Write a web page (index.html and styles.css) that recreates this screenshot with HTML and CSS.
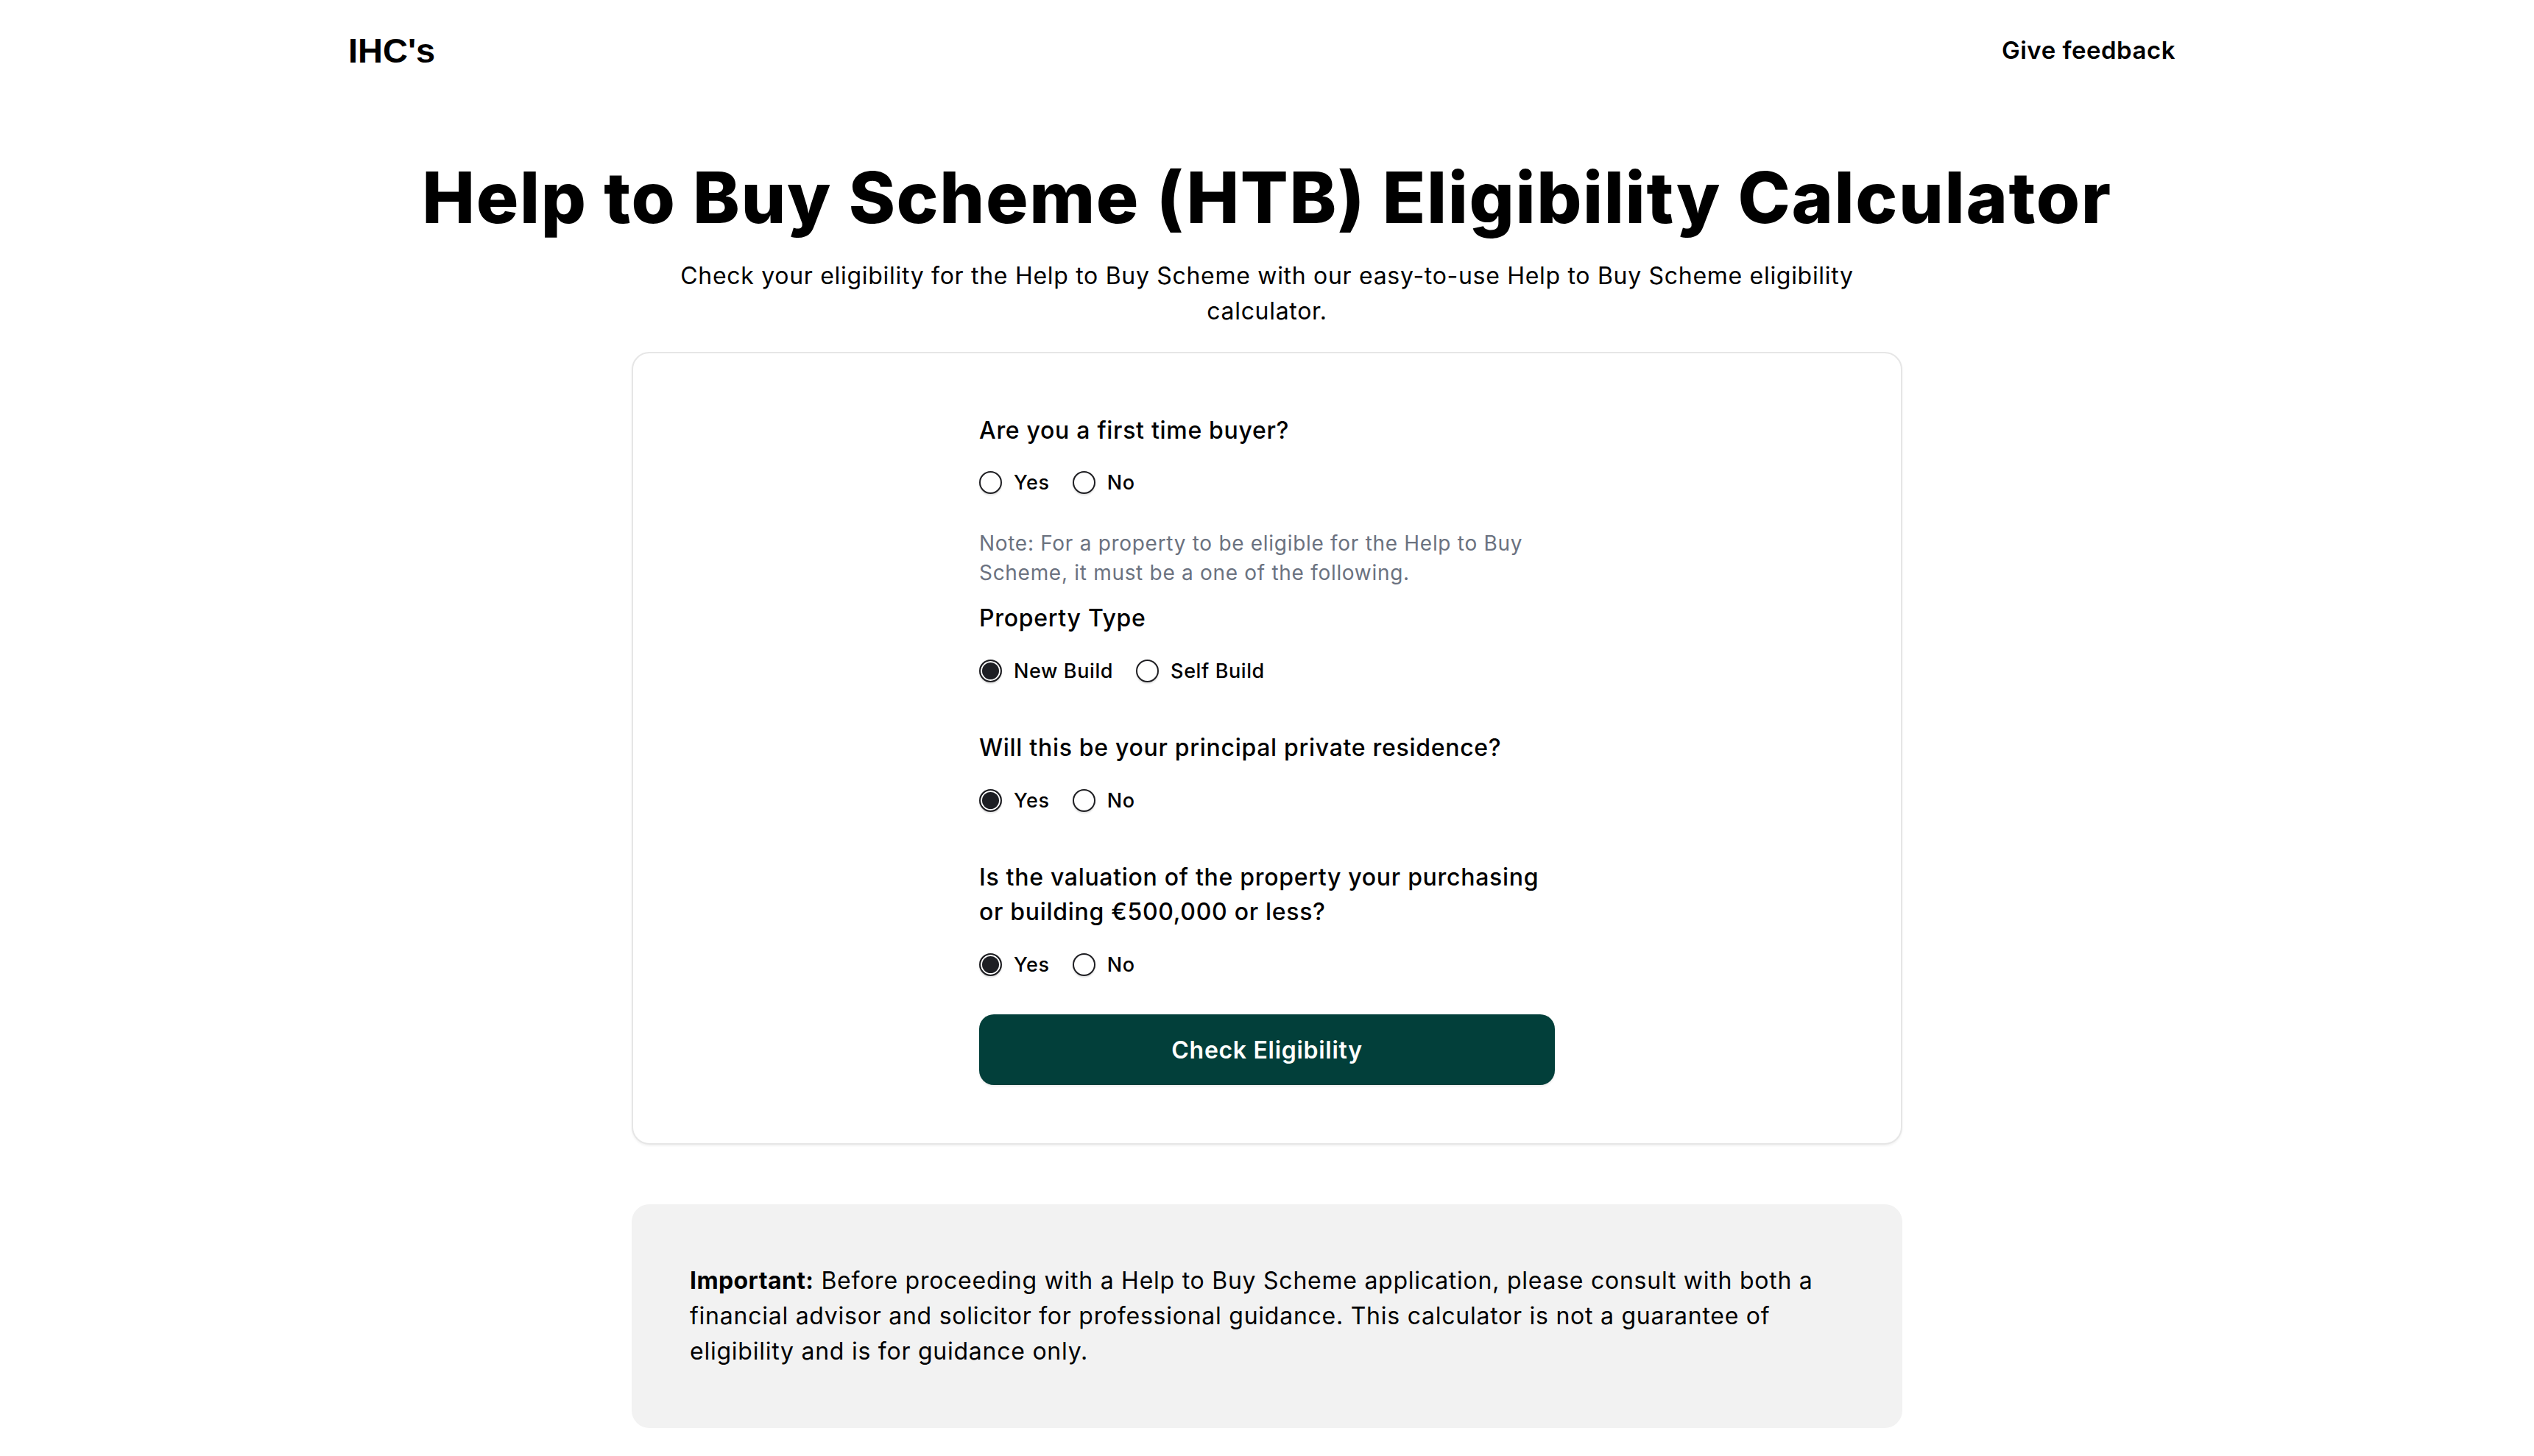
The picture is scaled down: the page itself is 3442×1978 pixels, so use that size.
FILE: index.html
```html
<!DOCTYPE html>
<html lang="en">
<head>
<meta charset="utf-8">
<title>Help to Buy Scheme (HTB) Eligibility Calculator</title>
<link rel="stylesheet" href="styles.css">
</head>
<body>
<header class="site-header">
  <a class="logo" href="#">IHC's</a>
  <a class="feedback" href="#">Give feedback</a>
</header>
<main class="main">
  <h1 class="title">Help to Buy Scheme (HTB) Eligibility Calculator</h1>
  <p class="subtitle">Check your eligibility for the Help to Buy Scheme with our easy-to-use Help to Buy Scheme eligibility calculator.</p>

  <section class="card">
    <form class="form">
      <div class="group">
        <p class="question">Are you a first time buyer?</p>
        <div class="options">
          <label class="option"><input type="radio" name="ftb"><span>Yes</span></label>
          <label class="option"><input type="radio" name="ftb"><span>No</span></label>
        </div>
      </div>

      <p class="note">Note: For a property to be eligible for the Help to Buy Scheme, it must be a one of the following.</p>

      <div class="group group-tight">
        <p class="question">Property Type</p>
        <div class="options">
          <label class="option"><input type="radio" name="ptype" checked><span>New Build</span></label>
          <label class="option"><input type="radio" name="ptype"><span>Self Build</span></label>
        </div>
      </div>

      <div class="group">
        <p class="question">Will this be your principal private residence?</p>
        <div class="options">
          <label class="option"><input type="radio" name="ppr" checked><span>Yes</span></label>
          <label class="option"><input type="radio" name="ppr"><span>No</span></label>
        </div>
      </div>

      <div class="group">
        <p class="question">Is the valuation of the property your purchasing or building €500,000 or less?</p>
        <div class="options">
          <label class="option"><input type="radio" name="val" checked><span>Yes</span></label>
          <label class="option"><input type="radio" name="val"><span>No</span></label>
        </div>
      </div>

      <button type="button" class="btn">Check Eligibility</button>
    </form>
  </section>

  <section class="important">
    <p><strong class="lead">Important:</strong>Before proceeding with a Help to Buy Scheme application, please consult with both a financial advisor and solicitor for professional guidance. This calculator is not a guarantee of eligibility and is for guidance only.</p>
  </section>
</main>
</body>
</html>
```

FILE: styles.css
```css
* {
  box-sizing: border-box;
}

html, body {
  margin: 0;
  padding: 0;
  background: #ffffff;
}

body {
  font-family: Inter, "Open Sans", "Noto Sans", sans-serif;
  color: #0a0a0a;
}

a {
  color: inherit;
  text-decoration: none;
}

p {
  margin: 0;
}

.site-header {
  height: 136px;
  display: flex;
  align-items: center;
  justify-content: space-between;
  padding: 0 487px 0 473px;
}

.logo {
  font-family: "Liberation Sans", Arial, sans-serif;
  font-weight: 700;
  font-size: 47px;
  color: #000;
}

.feedback {
  font-size: 33px;
  font-weight: 600;
  letter-spacing: 0.5px;
  color: #000;
}

.main {
  display: flex;
  flex-direction: column;
  align-items: center;
  padding-bottom: 40px;
}

.title {
  margin: 74px 0 0;
  font-size: 96px;
  line-height: 116px;
  font-weight: 800;
  letter-spacing: 1.6px;
  color: #000;
  text-align: center;
}

.subtitle {
  margin-top: 25px;
  max-width: 1700px;
  font-size: 32px;
  line-height: 48px;
  letter-spacing: 0.7px;
  text-align: center;
  color: #000;
}

.card {
  margin-top: 31px;
  width: 1726px;
  border: 2px solid #e6e6e6;
  border-radius: 24px;
  box-shadow: 0 2px 3px rgba(0, 0, 0, 0.05);
  background: #fff;
  padding: 81px 0 79px;
  display: flex;
  justify-content: center;
}

.form {
  width: 782px;
  display: flex;
  flex-direction: column;
}

.group {
  display: flex;
  flex-direction: column;
  gap: 25px;
  margin-bottom: 57px;
}

.group:first-child {
  gap: 24px;
  margin-bottom: 40px;
}

.group:last-of-type {
  margin-bottom: 44px;
}

.question {
  font-size: 32px;
  line-height: 47px;
  font-weight: 500;
  letter-spacing: 0.7px;
  color: #000;
}

.note {
  font-size: 28px;
  line-height: 39.5px;
  letter-spacing: 0.7px;
  color: #6b7280;
  margin-bottom: 18px;
}

.options {
  display: flex;
  align-items: center;
  gap: 31px;
  height: 47px;
}

.option {
  display: flex;
  align-items: center;
  gap: 16px;
  font-size: 27px;
  font-weight: 500;
  letter-spacing: 0.6px;
  color: #000;
}

.option input {
  appearance: none;
  -webkit-appearance: none;
  margin: 0;
  width: 31px;
  height: 31px;
  border: 2px solid #1f1f23;
  border-radius: 50%;
  background: #fff;
  box-shadow: 0 2px 2px rgba(0, 0, 0, 0.12);
}

.option input:checked {
  background: #1e1f24;
  box-shadow: inset 0 0 0 2px #fff, 0 2px 2px rgba(0, 0, 0, 0.12);
}

.btn {
  height: 96px;
  width: 100%;
  border: 0;
  border-radius: 20px;
  background: #023f3a;
  color: #fff;
  font-family: inherit;
  font-size: 32px;
  font-weight: 600;
  letter-spacing: 0.7px;
  box-shadow: 0 2px 3px rgba(0, 0, 0, 0.08);
}

.important {
  margin-top: 81px;
  width: 1726px;
  background: #f2f2f2;
  border-radius: 24px;
  padding: 80px 80px 80px 79px;
}

.important p {
  font-size: 32px;
  line-height: 48px;
  letter-spacing: 0.75px;
  color: #000;
}

.important .lead {
  display: inline-block;
  margin-right: 10px;
  font-weight: 700;
  letter-spacing: 0.4px;
}
```
